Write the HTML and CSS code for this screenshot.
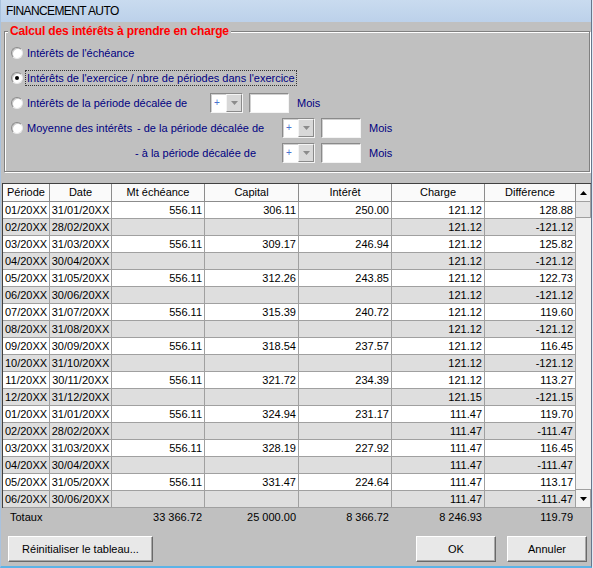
FILE: index.html
```html
<!DOCTYPE html>
<html lang="fr">
<head>
    <meta charset="UTF-8">
    <title>Financement auto</title>
    <link rel="stylesheet" href="styles.css">
</head>
<body>
    <div class="window">
        <div class="titlebar">FINANCEMENT AUTO</div>

        <fieldset class="group">
            <legend>Calcul des intérêts à prendre en charge</legend>
            <div class="options">
                <div class="opt">
                    <span class="radio"></span>
                    <span>Intérêts de l'échéance</span>
                </div>
                <div class="opt">
                    <span class="radio checked"></span>
                    <span class="focus">Intérêts de l'exercice / nbre de périodes dans l'exercice</span>
                </div>
                <div class="opt">
                    <span class="radio"></span>
                    <span class="lbl-shift">Intérêts de la période décalée de</span>
                    <span class="combo"><span class="sign">+</span><span class="drop"><svg width="7" height="4" viewBox="0 0 7 4"><polygon points="0,0 7,0 3.5,4" fill="#8c8c8c"/></svg></span></span>
                    <span class="field"></span>
                    <span class="unit">Mois</span>
                </div>
                <div class="opt">
                    <span class="radio"></span>
                    <span class="lbl-avg">Moyenne des intérêts</span>
                    <span class="lbl-from">- de la période décalée de</span>
                    <span class="combo"><span class="sign">+</span><span class="drop"><svg width="7" height="4" viewBox="0 0 7 4"><polygon points="0,0 7,0 3.5,4" fill="#8c8c8c"/></svg></span></span>
                    <span class="field"></span>
                    <span class="unit">Mois</span>
                </div>
                <div class="opt">
                    <span class="lbl-to">- à la période décalée de</span>
                    <span class="combo"><span class="sign">+</span><span class="drop"><svg width="7" height="4" viewBox="0 0 7 4"><polygon points="0,0 7,0 3.5,4" fill="#8c8c8c"/></svg></span></span>
                    <span class="field"></span>
                    <span class="unit">Mois</span>
                </div>
            </div>
        </fieldset>

        <div class="grid">
            <div class="table">
                <div class="row head">
                    <span>Période</span><span>Date</span><span>Mt échéance</span><span>Capital</span><span>Intérêt</span><span>Charge</span><span>Différence</span>
                </div>
                <div class="row"><span>01/20XX</span><span>31/01/20XX</span><span>556.11</span><span>306.11</span><span>250.00</span><span>121.12</span><span>128.88</span></div>
                <div class="row"><span>02/20XX</span><span>28/02/20XX</span><span></span><span></span><span></span><span>121.12</span><span>-121.12</span></div>
                <div class="row"><span>03/20XX</span><span>31/03/20XX</span><span>556.11</span><span>309.17</span><span>246.94</span><span>121.12</span><span>125.82</span></div>
                <div class="row"><span>04/20XX</span><span>30/04/20XX</span><span></span><span></span><span></span><span>121.12</span><span>-121.12</span></div>
                <div class="row"><span>05/20XX</span><span>31/05/20XX</span><span>556.11</span><span>312.26</span><span>243.85</span><span>121.12</span><span>122.73</span></div>
                <div class="row"><span>06/20XX</span><span>30/06/20XX</span><span></span><span></span><span></span><span>121.12</span><span>-121.12</span></div>
                <div class="row"><span>07/20XX</span><span>31/07/20XX</span><span>556.11</span><span>315.39</span><span>240.72</span><span>121.12</span><span>119.60</span></div>
                <div class="row"><span>08/20XX</span><span>31/08/20XX</span><span></span><span></span><span></span><span>121.12</span><span>-121.12</span></div>
                <div class="row"><span>09/20XX</span><span>30/09/20XX</span><span>556.11</span><span>318.54</span><span>237.57</span><span>121.12</span><span>116.45</span></div>
                <div class="row"><span>10/20XX</span><span>31/10/20XX</span><span></span><span></span><span></span><span>121.12</span><span>-121.12</span></div>
                <div class="row"><span>11/20XX</span><span>30/11/20XX</span><span>556.11</span><span>321.72</span><span>234.39</span><span>121.12</span><span>113.27</span></div>
                <div class="row"><span>12/20XX</span><span>31/12/20XX</span><span></span><span></span><span></span><span>121.15</span><span>-121.15</span></div>
                <div class="row"><span>01/20XX</span><span>31/01/20XX</span><span>556.11</span><span>324.94</span><span>231.17</span><span>111.47</span><span>119.70</span></div>
                <div class="row"><span>02/20XX</span><span>28/02/20XX</span><span></span><span></span><span></span><span>111.47</span><span>-111.47</span></div>
                <div class="row"><span>03/20XX</span><span>31/03/20XX</span><span>556.11</span><span>328.19</span><span>227.92</span><span>111.47</span><span>116.45</span></div>
                <div class="row"><span>04/20XX</span><span>30/04/20XX</span><span></span><span></span><span></span><span>111.47</span><span>-111.47</span></div>
                <div class="row"><span>05/20XX</span><span>31/05/20XX</span><span>556.11</span><span>331.47</span><span>224.64</span><span>111.47</span><span>113.17</span></div>
                <div class="row"><span>06/20XX</span><span>30/06/20XX</span><span></span><span></span><span></span><span>111.47</span><span>-111.47</span></div>
            </div>
            <div class="scrollbar">
                <span class="sb-btn"><svg width="7" height="4" viewBox="0 0 7 4"><polygon points="0,4 7,4 3.5,0" fill="#000"/></svg></span>
                <span class="sb-thumb"></span>
                <span class="sb-track"></span>
                <span class="sb-btn"><svg width="7" height="4" viewBox="0 0 7 4"><polygon points="0,0 7,0 3.5,4" fill="#000"/></svg></span>
            </div>
        </div>

        <div class="totals">
            <span class="totals-label">Totaux</span>
            <span>33 366.72</span>
            <span>25 000.00</span>
            <span>8 366.72</span>
            <span>8 246.93</span>
            <span>119.79</span>
        </div>

        <div class="actions">
            <button class="btn btn-reset">Réinitialiser le tableau...</button>
            <button class="btn btn-ok">OK</button>
            <button class="btn btn-cancel">Annuler</button>
        </div>
    </div>
</body>
</html>
```

FILE: styles.css
```css
* {
    margin: 0;
    padding: 0;
    box-sizing: border-box;
}

body {
    background-color: #dfe8f2;
    font-family: "Liberation Sans", Arial, sans-serif;
    font-size: 11px;
    color: #000;
}

.window {
    width: 592px;
    height: 568px;
    overflow: hidden;
    background-color: #c0c0c0;
    border-left: 1px solid #a9c2de;
    border-right: 1px solid #66778c;
    border-bottom: 2px solid #5cb3e6;
}

.titlebar {
    height: 22px;
    padding-left: 5px;
    background: linear-gradient(#c9dbef, #bcd1ea);
    font-size: 12px;
    letter-spacing: -0.6px;
    line-height: 22px;
}

/* cadre "Calcul des intérêts" */
.group {
    width: 586px;
    margin: 2px 0 0 3px;
    padding: 0;
    border: 1px solid #808080;
    box-shadow: 1px 1px 0 #fff, inset 1px 1px 0 #fff;
    min-inline-size: 0;
}

.group legend {
    margin-left: 3px;
    padding: 0 2px;
    background-color: #c0c0c0;
    color: #f00;
    font-weight: bold;
    font-size: 12px;
    letter-spacing: -0.15px;
    line-height: 14px;
}

.options {
    display: flex;
    flex-direction: column;
    gap: 5px;
    padding: 5px 0 8px 6px;
}

.opt {
    display: flex;
    align-items: center;
    height: 20px;
    color: #000080;
}

.radio {
    position: relative;
    width: 12px;
    height: 12px;
    margin-right: 4px;
    border-radius: 50%;
    background-color: #fff;
    border: 1px solid;
    border-color: #8a8a8a #e8e8e8 #e8e8e8 #8a8a8a;
    box-shadow: inset 1px 1px 0 #c8c8c8;
}

.radio.checked::after {
    content: "";
    position: absolute;
    left: 3px;
    top: 3px;
    width: 4px;
    height: 4px;
    border-radius: 50%;
    background-color: #000;
}

.focus {
    outline: 1px dotted #333;
    outline-offset: 1px;
}

.lbl-shift {
    width: 183px;
}

.lbl-avg {
    width: 110px;
}

.lbl-from {
    width: 145px;
}

.lbl-to {
    width: 147px;
    margin-left: 124px;
}

.combo {
    display: flex;
    width: 33px;
    height: 20px;
    background-color: #fff;
    border: 1px solid;
    border-color: #8a8a8a #f4f4f4 #f4f4f4 #8a8a8a;
    box-shadow: inset 1px 1px 0 #d0d0d0;
}

.sign {
    flex: 1;
    padding-left: 3px;
    color: #4a74d0;
    font-size: 10px;
    line-height: 18px;
}

.drop {
    display: flex;
    align-items: center;
    justify-content: center;
    width: 16px;
    background-color: #d8d8d8;
    border: 1px solid;
    border-color: #f4f4f4 #8a8a8a #8a8a8a #f4f4f4;
}

.field {
    width: 40px;
    height: 20px;
    margin-left: 6px;
    background-color: #fff;
    border: 1px solid;
    border-color: #8a8a8a #f4f4f4 #f4f4f4 #8a8a8a;
    box-shadow: inset 1px 1px 0 #d0d0d0;
}

.unit {
    margin-left: 8px;
}

/* tableau */
.grid {
    display: flex;
    width: 589px;
    margin: 11px 0 0 1px;
    border-left: 1px solid #404040;
    border-top: 1px solid #404040;
}

.table {
    width: 573px;
}

.row {
    display: grid;
    grid-template-columns: 47px 62px 93px 94px 93px 93px 91px;
    height: 17px;
    background-color: #fff;
}

.row:nth-child(odd) {
    background-color: #dedede;
}

.row span {
    padding-right: 2px;
    border-right: 1px solid #a0a0a0;
    border-bottom: 1px solid #a0a0a0;
    text-align: right;
    line-height: 16px;
    white-space: nowrap;
}

.row span:nth-child(1),
.row span:nth-child(2) {
    padding-right: 0;
    text-align: center;
}

.row.head {
    height: 18px;
    background-color: #fafafa;
}

.row.head span {
    padding-right: 0;
    text-align: center;
    line-height: 17px;
    border-color: #8c8c8c;
}

.scrollbar {
    display: flex;
    flex-direction: column;
    width: 15px;
    background-color: #f2f2f2;
}

.sb-btn {
    display: flex;
    align-items: center;
    justify-content: center;
    height: 18px;
    background-color: #f4f4f4;
    border-right: 1px solid #a0a0a0;
    border-bottom: 1px solid #a0a0a0;
}

.sb-thumb {
    height: 16px;
    background-color: #e6e6e6;
    border-right: 1px solid #a0a0a0;
    border-bottom: 1px solid #a0a0a0;
}

.sb-track {
    flex: 1;
    border-bottom: 1px solid #a0a0a0;
}

.totals {
    display: grid;
    grid-template-columns: 109px 93px 94px 93px 93px 91px;
    height: 18px;
    margin-left: 2px;
    line-height: 18px;
    text-align: right;
}

.totals span {
    padding-right: 3px;
}

.totals .totals-label {
    padding-left: 7px;
    text-align: left;
}

.actions {
    display: flex;
    margin-top: 10px;
    padding: 0 4px 0 7px;
}

.btn {
    height: 26px;
    background-color: #e8e8e8;
    border: 1px solid;
    border-color: #fff #696969 #696969 #fff;
    box-shadow: inset -1px -1px 0 #a8a8a8;
    font-family: "Liberation Sans", Arial, sans-serif;
    font-size: 11px;
    color: #000;
}

.btn-reset {
    width: 145px;
}

.btn-ok {
    width: 80px;
    margin-left: auto;
}

.btn-cancel {
    width: 80px;
    margin-left: 11px;
}
```
